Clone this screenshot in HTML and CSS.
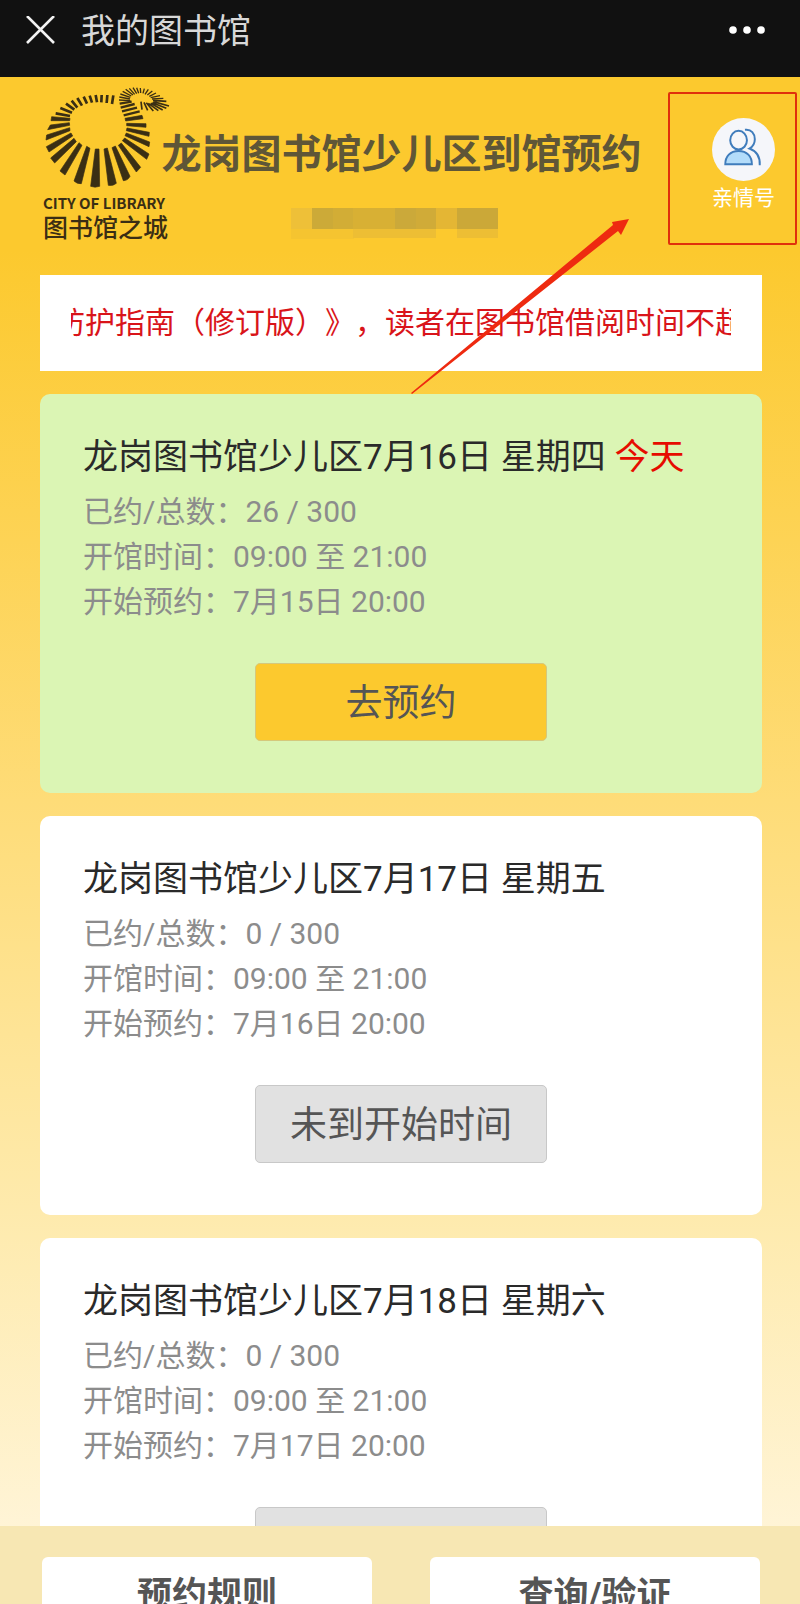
FILE: index.html
```html
<!DOCTYPE html>
<html lang="zh-CN">

<head>
    <meta charset="UTF-8">
    <meta name="viewport" content="width=device-width, initial-scale=1.0">
    <title>我的图书馆</title>
    <link rel="stylesheet" href="styles.css">
</head>

<body>
    <div class="page">
        <header class="topbar">
            <button class="icon-btn" type="button" aria-label="关闭">
                <svg width="30" height="30" viewBox="0 0 30 30" fill="none" stroke="#f2f2f2" stroke-width="2.6">
                    <path d="M1 0 28 27M28 0 1 27" />
                </svg>
            </button>
            <span class="topbar-title">我的图书馆</span>
            <button class="icon-btn more" type="button" aria-label="更多">
                <svg width="38" height="10" viewBox="0 0 38 10" fill="#fff">
                    <circle cx="5" cy="4" r="3.8" />
                    <circle cx="19" cy="4" r="3.8" />
                    <circle cx="33" cy="4" r="3.8" />
                </svg>
            </button>
        </header>

        <main class="content">
            <section class="banner">
                <div class="logo">
                    <svg class="logo-mark" viewBox="38 30 384 312" fill="#3a2e14" stroke="#3a2e14" aria-hidden="true">
                        <!-- long rays -->
                        <g stroke-width="2" stroke-linejoin="round">
                            <path d="M64 125 62 137 118 137 119 130Z" />
                            <path d="M60 150 52 164 118 151 117 143Z" />
                            <path d="M49 180 47 195 119 167 118 158Z" />
                            <path d="M48 215 56 231 127 183 122 174Z" />
                            <path d="M61 249 73 264 138 200 131 190Z" />
                            <path d="M89 288 104 300 155 211 146 203Z" />
                            <path d="M131 318Q141 328 153 326L179 220 169 214Z" />
                            <path d="M181 334Q194 339 208 334L206 222 195 222Z" />
                            <path d="M234 331Q248 334 258 325L231 219 221 222Z" />
                            <path d="M279 317Q292 317 299 304L255 213 245 218Z" />
                            <path d="M318 291 331 277 273 204 264 211Z" />
                            <path d="M349 253 356 237 283 189 276 197Z" />
                            <path d="M356 215 358 201 288 174 284 182Z" />
                            <path d="M356 184 357 172 290 159 288 167Z" />
                            <path d="M347 157 347 146 289 145 289 152Z" />
                            <path d="M338 131 335 121 284 130 286 138Z" />
                        </g>
                        <!-- short rays of the ring and the neck -->
                        <path fill="none" stroke-width="8" d="M249 61 245 87M231 60 229 84M214 60 213 82M196 60 200 82M178 62 185 83M160 65 170 86M141 69 155 92M124 77 141 98M107 86 132 104M90 99 125 113M76 115 119 123" />
                        <path fill="none" stroke-width="7" d="M328 109 280 121M320 98 275 109M313 87 271 98M304 80 268 86" />
                        <!-- head -->
                        <path fill="none" stroke-width="4" d="M266 75 300 77M267 66 299 72M270 57 300 67M277 49 303 63M286 43 308 60M297 40 313 58M308 38 319 56M319 38 325 55M330 39 331 54M342 41 338 55M354 43 344 58M366 48 351 60M377 54 357 64M389 62 361 68M399 70 365 72" />
                        <path fill="none" stroke-width="5" d="M408 79 368 76M416 93 369 80M408 100 366 83M397 105 361 85M384 107 354 85M369 108 348 83M352 106 341 82M335 104 332 80" />
                    </svg>
                    <span class="logo-en">CITY OF LIBRARY</span>
                    <span class="logo-cn">图书馆之城</span>
                </div>
                <div class="banner-main">
                    <h1>龙岗图书馆少儿区到馆预约</h1>
                    <svg class="masked-name" width="222" height="32" viewBox="0 0 222 32" aria-hidden="true">
                        <path fill="#eec038" d="M0 0h21v21H0z" />
                        <path fill="#f5c430" d="M0 21h63v10H0z" />
                        <path fill="#ccaa38" d="M21 0h21v21H21z" />
                        <path fill="#d2ad36" d="M42 0h20v21H42z" />
                        <path fill="#d8b034" d="M62 0h42v21H62z" />
                        <path fill="#cba93a" d="M104 0h21v21h-21z" />
                        <path fill="#d0ab38" d="M125 0h20v21h-20z" />
                        <path fill="#e4b634" d="M145 0h21v21h-21z" />
                        <path fill="#cba838" d="M166 0h41v21h-41z" />
                        <path fill="#edbe34" d="M62 21h83v9H62zM166 21h41v9h-41z" />
                    </svg>
                </div>
                <a class="family" href="#family">
                    <svg width="63" height="63" viewBox="0 0 64 64" fill="none" stroke="#3f7cbc" stroke-width="2">
                        <circle cx="32" cy="32" r="32" fill="#f5f6fa" stroke="none" />
                        <path d="M33.500 12C40 11 43.500 16 43.500 21.500C43.500 25.500 41.500 29 38 31C45 33.500 49 39 48.500 48" />
                        <path fill="#b3dcfa" d="M13.500 47C13.500 39 18.500 33.500 27 33.500S40.500 39 40.500 47Z" />
                        <ellipse cx="27" cy="22.500" rx="8.500" ry="9.500" fill="#f5f6fa" />
                    </svg>
                    <span>亲情号</span>
                </a>
                <div class="highlight"></div>
                <svg class="arrow" width="222" height="178" viewBox="0 0 222 178" fill="#ee2a10" aria-hidden="true">
                    <path d="M1 175 203 7 202 4 219 1 211 17 208 13 2 176Z" />
                </svg>
            </section>

            <div class="notice">
                <p>防护指南（修订版）》，读者在图书馆借阅时间不超过</p>
            </div>

            <article class="card today">
                <h2>龙岗图书馆少儿区7月16日 星期四 <em>今天</em></h2>
                <p>已约/总数：26 / 300</p>
                <p>开馆时间：09:00 至 21:00</p>
                <p>开始预约：7月15日 20:00</p>
                <button class="book-btn" type="button">去预约</button>
            </article>

            <article class="card">
                <h2>龙岗图书馆少儿区7月17日 星期五</h2>
                <p>已约/总数：0 / 300</p>
                <p>开馆时间：09:00 至 21:00</p>
                <p>开始预约：7月16日 20:00</p>
                <button class="book-btn" type="button" disabled>未到开始时间</button>
            </article>

            <article class="card">
                <h2>龙岗图书馆少儿区7月18日 星期六</h2>
                <p>已约/总数：0 / 300</p>
                <p>开馆时间：09:00 至 21:00</p>
                <p>开始预约：7月17日 20:00</p>
                <button class="book-btn" type="button" disabled>未到开始时间</button>
            </article>
        </main>

        <footer class="bottombar">
            <button type="button">预约规则</button>
            <button type="button">查询/验证</button>
        </footer>
    </div>
</body>

</html>
```
FILE: styles.css
```css
:root {
    --yellow: #fcc92e;
    --text-color: #2a2a2a;
    --muted-color: #8c8c8c;
    --button-text: #555;
    --font-family: Roboto, 'Noto Sans CJK SC', sans-serif;
}

* {
    box-sizing: border-box;
    margin: 0;
    padding: 0;
}

body {
    font-family: var(--font-family);
    color: var(--text-color);
}

button {
    font-family: inherit;
    border: none;
    cursor: pointer;
}

.page {
    display: flex;
    flex-direction: column;
    height: 100vh;
    overflow: hidden;
}

/* Top bar */
.topbar {
    flex: none;
    display: flex;
    align-items: center;
    height: 77px;
    padding: 0 34px 16px 26px;
    background-color: #111;
}

.icon-btn {
    display: flex;
    background: none;
}

.topbar-title {
    margin-left: 25px;
    font-size: 34px;
    line-height: 40px;
    color: #d8d8d8;
}

.more {
    margin-left: auto;
}

.content {
    flex: 1;
    min-height: 0;
    overflow: hidden;
    padding: 0 38px 0 40px;
    background: linear-gradient(var(--yellow) 12%, #fedc78 50%, #feebb0 80%, #fff4d6);
}

.banner {
    position: relative;
    display: flex;
    height: 198px;
    margin-right: -38px;
}

.logo {
    display: flex;
    flex-direction: column;
    width: 121px;
    padding: 8px 0 0 3px;
    color: #3a2e14;
    white-space: nowrap;
}

.logo-mark {
    flex: none;
    width: 128px;
    height: 104px;
}

.logo-en {
    margin-top: 4px;
    font-family: 'Noto Sans CJK SC', sans-serif;
    font-size: 15px;
    font-weight: 700;
    line-height: 20px;
}

.logo-cn {
    font-size: 25px;
    font-weight: 500;
    line-height: 32px;
}

.banner-main {
    flex: 1;
    display: flex;
    flex-direction: column;
    align-items: center;
    padding-top: 54px;
}

h1 {
    font-size: 40px;
    font-weight: 700;
    line-height: 48px;
    color: #5f5637;
    white-space: nowrap;
}

.masked-name {
    margin-top: 29px;
}

.family {
    display: flex;
    flex-direction: column;
    align-items: center;
    width: 158px;
    padding: 41px 14px 0 59px;
    font-size: 21px;
    line-height: 34px;
    color: #fff;
    text-decoration: none;
    white-space: nowrap;
}

.highlight {
    position: absolute;
    top: 15px;
    right: 3px;
    width: 129px;
    height: 153px;
    border: 2px solid #e0300c;
    border-radius: 2px;
}

.arrow {
    position: absolute;
    top: 141px;
    right: 168px;
    z-index: 1;
}

.notice {
    height: 96px;
    padding: 24px 31px;
    background-color: #fff;
}

.notice p {
    overflow: hidden;
    font-size: 30px;
    line-height: 48px;
    color: #d9141a;
    white-space: nowrap;
    text-indent: -16px;
    text-spacing-trim: space-all;
}

/* Day cards */
.card {
    margin-top: 23px;
    padding: 39px 43px 52px;
    background-color: #fff;
    border-radius: 10px;
}

.card.today {
    background-color: #dbf5b4;
}

.card h2 {
    margin-bottom: 6px;
    font-size: 35px;
    font-weight: 400;
    line-height: 50px;
    white-space: nowrap;
}

.card em {
    font-style: normal;
    color: #e60c00;
}

.card p {
    font-size: 30px;
    line-height: 45px;
    color: var(--muted-color);
}

.book-btn {
    display: block;
    width: 292px;
    height: 78px;
    margin: 39px auto 0;
    padding-bottom: 4px;
    border: 1px solid #c8c8c8;
    border-radius: 5px;
    background-color: #e1e1e1;
    font-size: 37px;
    color: var(--button-text);
}

.today .book-btn {
    border-color: #d5c87c;
    background-color: var(--yellow);
}

/* Bottom bar */
.bottombar {
    flex: none;
    display: flex;
    gap: 58px;
    height: 78px;
    padding: 31px 40px 0 42px;
    overflow: hidden;
    background-color: #f7e7b3;
}

.bottombar button {
    flex: 1;
    height: 72px;
    padding-bottom: 4px;
    border-radius: 6px;
    background-color: #fff;
    font-size: 35px;
    font-weight: 700;
    color: var(--button-text);
}
```
